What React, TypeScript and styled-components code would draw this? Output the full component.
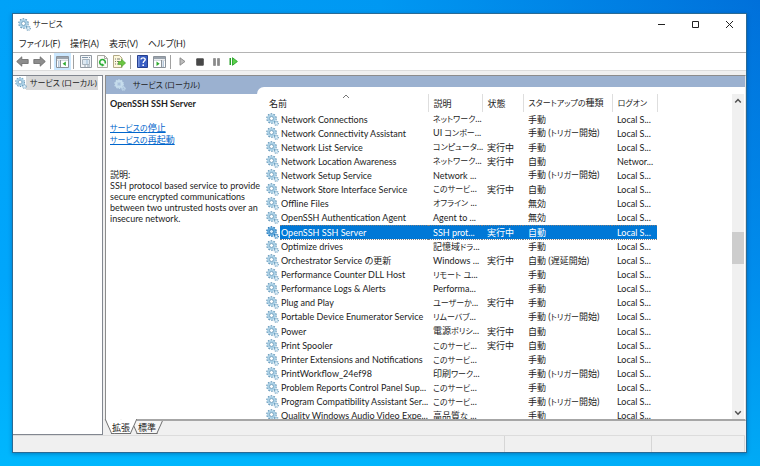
import React from "react";
import styled, { createGlobalStyle, css } from "styled-components";

const GlobalStyle = createGlobalStyle`
  * { box-sizing: border-box; }
  body { margin: 0; }
  body, button, table {
    font-family: Lato, "Noto Sans CJK JP", sans-serif;
    font-size: 9px;
    line-height: 11px;
    font-feature-settings: "palt";
    color: #1c1c1c;
  }
  button { background: none; border: 0; padding: 0; }
`;

const Desktop = styled.div`
  display: flex;
  height: 100vh;
  padding: 13px 13px 13px 12px;
  background:
    linear-gradient(to top, rgba(0, 190, 255, 0.75) 0%, rgba(0, 170, 255, 0.5) 40%, rgba(0, 140, 240, 0) 100%),
    linear-gradient(to right, #00a2f8 0%, #0098f2 50%, #0070da 100%);
`;

const Window = styled.main`
  flex: 1;
  min-width: 0;
  display: flex;
  flex-direction: column;
  background: #f0f0f0;
  border: 1px solid #2a6a94;
  box-shadow: 0 1px 4px rgba(0, 30, 90, 0.35);
`;

const SmallKana = styled.span`
  font-size: 8px;
`;

const TitleBar = styled.header`
  display: flex;
  align-items: center;
  height: 20px;
  padding-left: 5px;
  background: #fff;
`;

const Title = styled.h1`
  flex: 1;
  margin: 0 0 0 2px;
  font-size: 8px;
  font-weight: 400;
`;

const CaptionButton = styled.button`
  width: 34px;
  height: 20px;
  display: grid;
  place-items: center;
`;

const MenuBar = styled.nav`
  display: flex;
  align-items: center;
  gap: 10px;
  height: 19px;
  padding-left: 6px;
  background: #fff;
  border-bottom: 1px solid #b4b4b4;
`;

const Toolbar = styled.div`
  display: flex;
  align-items: center;
  height: 18px;
  padding-left: 1px;
  background: #fff;
  border-bottom: 1px solid #dcdcdc;
`;

const ToolButton = styled.button<{ $active?: boolean }>`
  width: 17px;
  height: 17px;
  display: grid;
  place-items: center;
  background: ${(p) => (p.$active ? "#cce8ff" : "transparent")};
`;

const Separator = styled.span`
  width: 1px;
  height: 14px;
  margin: 0 3px 0 2px;
  background: #a0a0a0;
`;

const Body = styled.div`
  flex: 1;
  min-height: 0;
  display: flex;
  gap: 2px;
  padding-top: 4px;
`;

const TreePane = styled.aside`
  width: 90px;
  background: #fff;
  border: 1px solid #828790;
  border-left: 0;
`;

const TreeItem = styled.div`
  display: flex;
  align-items: center;
  gap: 3px;
  width: max-content;
  height: 14px;
  margin-left: 1px;
  padding: 0 1px;
  font-size: 8px;
  background: linear-gradient(to right, #fff 12px, #d9d9d9 12px);
`;

const MainColumn = styled.div`
  flex: 1;
  min-width: 0;
  display: flex;
  flex-direction: column;
`;

const Frame = styled.section`
  flex: 1;
  min-height: 0;
  display: flex;
  background: #fff;
  border: 1px solid #8c8c8c;
  border-right-color: #e3e3e3;
  border-bottom-width: 2px;
  border-bottom-color: #a6a6a6;
`;

const DetailColumn = styled.div`
  width: 151px;
  flex: none;
`;

const PaneTitle = styled.h2`
  display: flex;
  align-items: center;
  gap: 7px;
  height: 18px;
  margin: 0;
  padding-left: 8px;
  background: #9bb1d0;
  font-size: 8px;
  font-weight: 400;
`;

const Details = styled.div`
  position: relative;
  margin-right: -4px;
  padding: 4px 0 0 4px;

  p { margin: 0; }
`;

const ServiceName = styled.h3`
  margin: 0;
  font-size: 9px;
  font-weight: 700;
`;

const Actions = styled.div`
  display: flex;
  flex-direction: column;
  align-items: flex-start;
  margin: 13px 0 23px;
`;

const Action = styled.a`
  color: #0066cc;
  text-decoration: underline;
`;

const ListColumn = styled.div`
  flex: 1;
  min-width: 0;
  display: flex;
  padding-top: 11px;
  background: linear-gradient(#9bb1d0 18px, #fff 18px);
`;

const ListArea = styled.div`
  flex: 1;
  min-width: 0;
  display: flex;
  padding-top: 7px;
  background: #fff;
  border-top-left-radius: 7px;
`;

const ListViewport = styled.div`
  flex: 1;
  min-width: 0;
  overflow: hidden;
`;

const ServiceTable = styled.table`
  width: 400px;
  table-layout: fixed;
  border-collapse: collapse;
  white-space: nowrap;
`;

const HeadRow = styled.tr`
  height: 18px;
`;

const Head = styled.th<{ $first?: boolean }>`
  position: relative;
  padding: 0 0 0 ${(p) => (p.$first ? 12 : 5)}px;
  border-right: 1px solid #dedede;
  text-align: left;
  font-weight: 400;
`;

const SortMark = styled.svg`
  position: absolute;
  top: 0;
  left: 50%;
`;

const Cell = styled.td`
  padding: 0 0 0 5px;
  line-height: 13px;
`;

const NameCell = styled(Cell)`
  padding-left: 1px;
`;

const IconCell = styled(Cell)`
  padding: 0 1px 0 0;

  svg { display: block; margin-left: auto; }
`;

const selectedRow = css`
  color: #fff;

  ${Cell}:not(:first-child) {
    background: #0078d7;
    border-top: 1px dotted #7a7f86;
    border-bottom: 1px dotted #7a7f86;
    line-height: 11px;
  }
`;

const Row = styled.tr<{ $selected?: boolean }>`
  height: 14px;

  &:nth-child(8n) { height: 15px; }
  ${(p) => p.$selected && selectedRow}
`;

const ScrollBar = styled.div`
  width: 12px;
  margin-right: 1px;
  display: grid;
  grid-template-rows: 14px 125fr 32fr 144fr 12px;
  background: #f0f0f0;
`;

const ScrollButton = styled.button<{ $end?: boolean }>`
  grid-row: ${(p) => (p.$end ? 5 : 1)};
  display: grid;
  place-items: center;
`;

const ScrollThumb = styled.div`
  grid-row: 3;
  background: #cdcdcd;
`;

const Tabs = styled.div`
  display: flex;
  height: 14px;
  padding-left: 3px;
`;

const Tab = styled.button<{ $active?: boolean }>`
  position: relative;
  z-index: ${(p) => (p.$active ? 1 : 0)};
  width: 26px;
  height: 13px;
  isolation: isolate;

  &::before,
  &::after {
    content: "";
    position: absolute;
    z-index: -1;
    top: ${(p) => (p.$active ? -2 : 0)}px;
    bottom: 0;
    width: 15px;
    background: ${(p) => (p.$active ? "#fff" : "#f6f6f6")};
    border-bottom: 1px solid #6e6e6e;
  }
  &::before {
    left: 0;
    border-left: 1px solid #6e6e6e;
    transform: skewX(24deg);
  }
  &::after {
    right: 0;
    border-right: 1px solid #6e6e6e;
    transform: skewX(-24deg);
  }
`;

const StatusBar = styled.footer`
  display: grid;
  grid-template-columns: 1fr 147px 93px;
  height: 17px;
  margin-right: 1px;
  border-top: 1px solid #dcdcdc;
`;

const StatusCell = styled.span`
  border-right: 1px solid #d6d6d6;
`;

function Gears({ size = 13, selected = false, pale = false }: { size?: number; selected?: boolean; pale?: boolean }) {
  const rim = selected ? "#1269ad" : pale ? "#c3dcec" : "#5f93b5";
  const fill = selected ? "#5fa9dd" : pale ? "#c6dcec" : "#a9d0e6";
  return (
    <svg width={size} height={size} viewBox="0 0 26 26" aria-hidden="true">
      <circle cx="11" cy="11" r="9" fill="none" stroke={rim} strokeWidth="3" strokeDasharray="3.2 2.45" />
      <circle cx="11" cy="11" r="6.5" fill="none" stroke={fill} strokeWidth="4.5" />
      <circle cx="11" cy="11" r="4" fill={selected ? "#d6ecfb" : pale ? "#a9c0dc" : "#fff"} stroke={rim} strokeWidth="1.6" />
      <circle cx="20.5" cy="20.5" r="3.8" fill="none" stroke={rim} strokeWidth="2.6" strokeDasharray="1.8 1.2" />
      <circle cx="20.5" cy="20.5" r="2.6" fill={pale ? "#a9c0dc" : "#e8f3fa"} stroke={fill} strokeWidth="1.6" />
    </svg>
  );
}

function Arrow({ flip = false }: { flip?: boolean }) {
  return (
    <svg width="13" height="11" viewBox="0 0 13 11" aria-hidden="true">
      <path
        d={flip ? "M12.3 5.5 7.2.8v2.7H.8v4h6.4v2.7z" : "M.7 5.5 5.8.8v2.7h6.4v4H5.8v2.7z"}
        fill="#8d8d8d"
        stroke="#686868"
        strokeWidth=".8"
      />
    </svg>
  );
}

function PaneIcon({ side }: { side: "left" | "right" }) {
  const left = side === "left";
  return (
    <svg width="13" height="12" viewBox="0 0 13 12" aria-hidden="true">
      <path d="M.5.5h12v11H.5z" fill="#fff" stroke="#8b929a" />
      <path d="M1 1h11v2H1z" fill="#9aa3ad" />
      <path d="M1 4.2h11" stroke="#c3c9cf" />
      {left ? (
        <>
          <path d="M4.5 4v7" stroke="#8b929a" />
          <path d="M2 6h1.5M2 8h1.5M2 10h1.5" stroke="#6a8fb5" />
          <path d="M9.8 5.5v4.4L6.6 7.7z" fill="#2faa2f" />
        </>
      ) : (
        <>
          <path d="M8.5 4v7" stroke="#8b929a" />
          <path d="M9.5 6H11M9.5 8H11M9.5 10H11" stroke="#6a8fb5" />
          <path d="M3.5 5.5v4.4l3.2-2.2z" fill="#2faa2f" />
        </>
      )}
    </svg>
  );
}

function PropertiesIcon() {
  return (
    <svg width="12" height="13" viewBox="0 0 12 13" aria-hidden="true">
      <path d="M.5.5h11v12H.5z" fill="#f4f6f8" stroke="#929aa2" />
      <path d="M2 2.5h6M9 2.5h1" stroke="#8097ac" />
      <path d="M2.5 4.5h7v5h-7z" fill="#fff" stroke="#a8b4be" />
      <path d="M3.5 6h1M5.5 6h3M3.5 8h1M5.5 8h3" stroke="#6d9cc4" strokeWidth=".9" />
      <path d="M4 11h2M7 11h3" stroke="#8da0b0" />
    </svg>
  );
}

function RefreshIcon() {
  return (
    <svg width="11" height="13" viewBox="0 0 11 13" aria-hidden="true">
      <path d="M.5.5h7l3 3v9H.5z" fill="#fbfbf8" stroke="#a9a9a2" />
      <path d="M7.5.5v3h3" fill="none" stroke="#a9a9a2" />
      <path d="M8 8.5A2.8 2.8 0 1 0 5 10" fill="none" stroke="#2fae38" strokeWidth="1.6" />
      <path d="M4.8 8.2v3.6L7.6 10z" fill="#2fae38" />
    </svg>
  );
}

function ExportIcon() {
  return (
    <svg width="13" height="13" viewBox="0 0 13 13" aria-hidden="true">
      <path d="M.5.5h6l2.5 2.5v9.5H.5z" fill="#fdf8dc" stroke="#b3aa86" />
      <path d="M2 4h1M4 4h3M2 6.5h1M4 6.5h2M2 9h1M4 9h2" stroke="#7a7a72" />
      <path d="M5.5 6.5h3V4.2L12.6 8l-4.1 3.8V9.5h-3z" fill="#6cc640" stroke="#3f9c25" strokeWidth=".6" />
    </svg>
  );
}

function HelpIcon() {
  return (
    <svg width="11" height="13" viewBox="0 0 11 13" aria-hidden="true">
      <path d="M.5.5h10v12H.5z" fill="#3a5fc4" stroke="#27408f" />
      <path d="M1 1h1.6v11H1z" fill="#7390dc" />
      <path d="M4 4.6C4 2.2 8.2 2.3 8.2 4.6 8.2 6.2 6.2 6 6.2 8.1" fill="none" stroke="#fff" strokeWidth="1.4" />
      <circle cx="6.2" cy="10.2" r=".9" fill="#fff" />
    </svg>
  );
}

function PlayIcon() {
  return (
    <svg width="7" height="9" viewBox="0 0 7 9" aria-hidden="true">
      <path d="M1 .8 6 4.5 1 8.2z" fill="#bdbdbd" stroke="#858585" strokeWidth=".9" />
    </svg>
  );
}

function StopIcon() {
  return (
    <svg width="8" height="8" viewBox="0 0 8 8" aria-hidden="true">
      <rect x=".2" y=".2" width="7.6" height="7.6" rx="1" fill="#484848" />
    </svg>
  );
}

function PauseIcon() {
  return (
    <svg width="7" height="8" viewBox="0 0 7 8" aria-hidden="true">
      <path d="M.5.5h2v7h-2zM4.5.5h2v7h-2z" fill="#8a8a8a" stroke="#6c6c6c" strokeWidth=".5" />
    </svg>
  );
}

function RestartIcon() {
  return (
    <svg width="9" height="9" viewBox="0 0 9 9" aria-hidden="true">
      <path d="M.5 1H2v7H.5z" fill="#28a028" />
      <path d="M3.5.7 8.4 4.5 3.5 8.3z" fill="#5bd24a" stroke="#28a028" strokeWidth=".9" />
    </svg>
  );
}

function Chevron({ down = false }: { down?: boolean }) {
  return (
    <svg width="8" height="6" viewBox="0 0 8 6" aria-hidden="true">
      <path d={down ? "M1.2 1.3 4 4.2l2.8-2.9" : "M1.2 4.5 4 1.6l2.8 2.9"} fill="none" stroke="#505050" strokeWidth="1.5" />
    </svg>
  );
}

// Sets runs of kana one size smaller than the kanji and Latin around them.
function Label({ text }: { text: string }) {
  return (
    <>
      {text.split(/([ぁ-ヶー]+)/).map((part, i) => (i % 2 ? <SmallKana key={i}>{part}</SmallKana> : part))}
    </>
  );
}

const menus = ["ファイル(F)", "操作(A)", "表示(V)", "ヘルプ(H)"];

const trigger = "手動 (トリガー開始)";
const running = "実行中";

const services: [name: string, description: string, status: string, startup: string, logon?: string][] = [
  ["Network Connections", "ネットワーク...", "", "手動"],
  ["Network Connectivity Assistant", "UI コンポー...", "", trigger],
  ["Network List Service", "コンピュータ...", running, "手動"],
  ["Network Location Awareness", "ネットワーク...", running, "自動", "Networ..."],
  ["Network Setup Service", "Network ...", "", trigger],
  ["Network Store Interface Service", "このサービ...", running, "自動"],
  ["Offline Files", "オフライン ...", "", "無効"],
  ["OpenSSH Authentication Agent", "Agent to ...", "", "無効"],
  ["OpenSSH SSH Server", "SSH prot...", running, "自動"],
  ["Optimize drives", "記憶域ドラ...", "", "手動"],
  ["Orchestrator Service の更新", "Windows ...", running, "自動 (遅延開始)"],
  ["Performance Counter DLL Host", "リモート ユ...", "", "手動"],
  ["Performance Logs & Alerts", "Performa...", "", "手動"],
  ["Plug and Play", "ユーザーか...", running, "手動"],
  ["Portable Device Enumerator Service", "リムーバブ...", "", trigger],
  ["Power", "電源ポリシ...", running, "自動"],
  ["Print Spooler", "このサービ...", running, "自動"],
  ["Printer Extensions and Notifications", "このサービ...", "", "手動"],
  ["PrintWorkflow_24ef98", "印刷ワーク...", "", trigger],
  ["Problem Reports Control Panel Sup...", "このサービ...", "", "手動"],
  ["Program Compatibility Assistant Ser...", "このサービ...", "", trigger],
  ["Quality Windows Audio Video Expe...", "高品質な ...", "", "手動"],
];

const selectedService = "OpenSSH SSH Server";

export default function App() {
  return (
    <>
      <GlobalStyle />
      <Desktop>
        <Window>
          <TitleBar>
            <Gears />
            <Title>サービス</Title>
            <CaptionButton aria-label="最小化">
              <svg width="9" height="9" viewBox="0 0 9 9"><path d="M1 4.5h7" stroke="#222" /></svg>
            </CaptionButton>
            <CaptionButton aria-label="最大化">
              <svg width="9" height="9" viewBox="0 0 9 9"><path d="M1.5 1.5h6v6h-6z" fill="none" stroke="#222" /></svg>
            </CaptionButton>
            <CaptionButton aria-label="閉じる">
              <svg width="9" height="9" viewBox="0 0 9 9"><path d="m1 1 7 7M8 1 1 8" stroke="#222" /></svg>
            </CaptionButton>
          </TitleBar>
          <MenuBar>
            {menus.map((label) => <button key={label}>{label}</button>)}
          </MenuBar>
          <Toolbar>
            <ToolButton aria-label="戻る"><Arrow /></ToolButton>
            <ToolButton aria-label="進む"><Arrow flip /></ToolButton>
            <Separator />
            <ToolButton aria-label="コンソール ツリーの表示" $active><PaneIcon side="left" /></ToolButton>
            <Separator />
            <ToolButton aria-label="プロパティ"><PropertiesIcon /></ToolButton>
            <ToolButton aria-label="最新の情報に更新"><RefreshIcon /></ToolButton>
            <ToolButton aria-label="一覧のエクスポート"><ExportIcon /></ToolButton>
            <Separator />
            <ToolButton aria-label="ヘルプ"><HelpIcon /></ToolButton>
            <ToolButton aria-label="操作ウィンドウの表示"><PaneIcon side="right" /></ToolButton>
            <Separator />
            <ToolButton aria-label="サービスの開始"><PlayIcon /></ToolButton>
            <ToolButton aria-label="サービスの停止"><StopIcon /></ToolButton>
            <ToolButton aria-label="サービスの一時停止"><PauseIcon /></ToolButton>
            <ToolButton aria-label="サービスの再起動"><RestartIcon /></ToolButton>
          </Toolbar>
          <Body>
            <TreePane>
              <TreeItem><Gears size={12} />サービス (ローカル)</TreeItem>
            </TreePane>
            <MainColumn>
              <Frame>
                <DetailColumn>
                  <PaneTitle><Gears size={12} pale />サービス (ローカル)</PaneTitle>
                  <Details>
                    <ServiceName>{selectedService}</ServiceName>
                    <Actions>
                      <Action href="#stop"><Label text="サービスの停止" /></Action>
                      <Action href="#restart"><Label text="サービスの再起動" /></Action>
                    </Actions>
                    <p>説明:</p>
                    <p>SSH protocol based service to provide secure encrypted communications between two untrusted hosts over an insecure network.</p>
                  </Details>
                </DetailColumn>
                <ListColumn>
                  <ListArea>
                    <ListViewport>
                      <ServiceTable>
                        <colgroup>
                          <col width="23" />
                          <col width="148" />
                          <col width="54" />
                          <col width="41" />
                          <col width="89" />
                          <col width="45" />
                        </colgroup>
                        <thead>
                          <HeadRow>
                            <Head $first colSpan={2}>
                              名前
                              <SortMark width="8" height="5" viewBox="0 0 8 5">
                                <path d="m1 4 3-3 3 3" fill="none" stroke="#777" />
                              </SortMark>
                            </Head>
                            <Head>説明</Head>
                            <Head>状態</Head>
                            <Head><Label text="スタートアップの種類" /></Head>
                            <Head><Label text="ログオン" /></Head>
                          </HeadRow>
                        </thead>
                        <tbody>
                          {services.map(([name, description, status, startup, logon = "Local S..."]) => {
                            const selected = name === selectedService;
                            return (
                              <Row key={name} $selected={selected}>
                                <IconCell><Gears selected={selected} /></IconCell>
                                <NameCell>{name}</NameCell>
                                <Cell><Label text={description} /></Cell>
                                <Cell>{status}</Cell>
                                <Cell><Label text={startup} /></Cell>
                                <Cell>{logon}</Cell>
                              </Row>
                            );
                          })}
                        </tbody>
                      </ServiceTable>
                    </ListViewport>
                    <ScrollBar>
                      <ScrollButton aria-label="上へスクロール"><Chevron /></ScrollButton>
                      <ScrollThumb />
                      <ScrollButton aria-label="下へスクロール" $end><Chevron down /></ScrollButton>
                    </ScrollBar>
                  </ListArea>
                </ListColumn>
              </Frame>
              <Tabs>
                <Tab $active>拡張</Tab>
                <Tab>標準</Tab>
              </Tabs>
            </MainColumn>
          </Body>
          <StatusBar>
            <StatusCell />
            <StatusCell />
            <StatusCell />
          </StatusBar>
        </Window>
      </Desktop>
    </>
  );
}
